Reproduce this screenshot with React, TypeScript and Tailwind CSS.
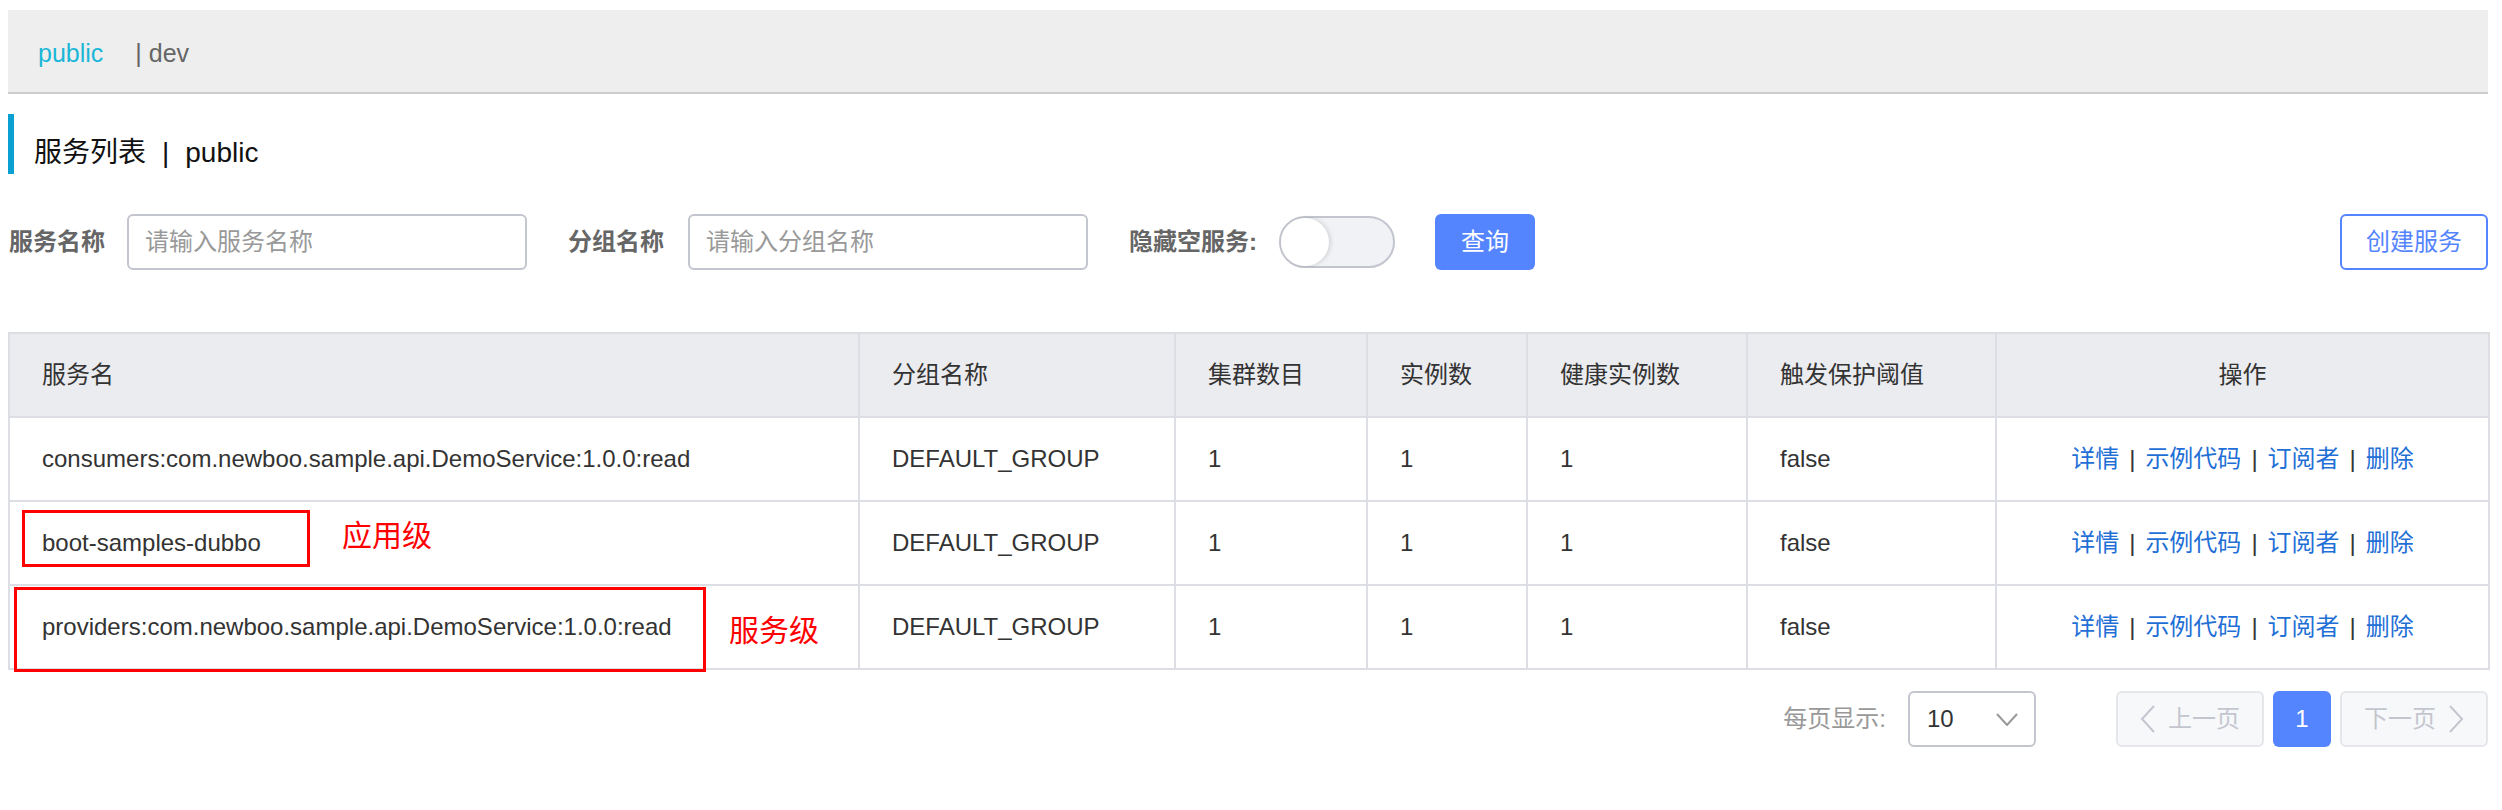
import { useState } from "react"

type Row = {
    name: string
    group: string
    clusters: number
    instances: number
    healthy: number
    threshold: string
}

const rows: Row[] = [
    { name: "consumers:com.newboo.sample.api.DemoService:1.0.0:read", group: "DEFAULT_GROUP", clusters: 1, instances: 1, healthy: 1, threshold: "false" },
    { name: "boot-samples-dubbo", group: "DEFAULT_GROUP", clusters: 1, instances: 1, healthy: 1, threshold: "false" },
    { name: "providers:com.newboo.sample.api.DemoService:1.0.0:read", group: "DEFAULT_GROUP", clusters: 1, instances: 1, healthy: 1, threshold: "false" },
]

const font = { fontFamily: '"Liberation Sans", "Noto Sans CJK SC", sans-serif' }

function ChevronLeft() {
    return (
        <svg width="16" height="28" viewBox="0 0 16 28" fill="none">
            <polyline points="14,1 2,14 14,27" stroke="#c4c6cf" strokeWidth="2" />
        </svg>
    )
}

function ChevronRight() {
    return (
        <svg width="16" height="28" viewBox="0 0 16 28" fill="none">
            <polyline points="2,1 14,14 2,27" stroke="#c4c6cf" strokeWidth="2" />
        </svg>
    )
}

export default function App() {
    const [hideEmpty, setHideEmpty] = useState(false)

    return (
        <div className="w-[2480px] ml-[8px] pt-[10px] bg-white text-[#333]" style={font}>
            {/* namespace bar */}
            <div className="h-[84px] bg-[#eeeeee] border-b-2 border-[#cccccc] flex items-center pl-[30px] pt-[6px] text-[25px]">
                <span className="text-[#1ab6d8]">public</span>
                <span className="ml-[32px] text-[#666]">| dev</span>
            </div>

            {/* title */}
            <div className="mt-[20px] h-[60px] flex items-end">
                <div className="w-[6px] h-full bg-[#0aa0d2]" />
                <div className="ml-[20px] text-[28px] leading-[42px] text-[#111]">
                    服务列表<span className="mx-[16px]">|</span>public
                </div>
            </div>

            {/* search */}
            <div className="mt-[40px] w-full h-[56px] flex items-center text-[24px]">
                <span className="shrink-0 ml-[1px] font-bold text-[#666]">服务名称</span>
                <input
                    className="shrink-0 ml-[22px] w-[400px] h-[56px] border-2 border-[#c4c6cf] rounded-[6px] px-[16px] outline-none placeholder:text-[#999]"
                    placeholder="请输入服务名称"
                />
                <span className="shrink-0 ml-[41px] font-bold text-[#666]">分组名称</span>
                <input
                    className="shrink-0 ml-[24px] w-[400px] h-[56px] border-2 border-[#c4c6cf] rounded-[6px] px-[16px] outline-none placeholder:text-[#999]"
                    placeholder="请输入分组名称"
                />
                <span className="shrink-0 ml-[41px] font-bold text-[#666]">隐藏空服务:</span>
                <button
                    onClick={() => setHideEmpty(!hideEmpty)}
                    className="shrink-0 ml-[22px] w-[116px] h-[52px] rounded-full border-2 border-[#c4c6cf] bg-[#f1f2f6] flex items-center"
                >
                    <span className="w-[48px] h-[48px] rounded-full bg-white shadow-[2px_0_4px_rgba(0,0,0,0.12)]" />
                </button>
                <button className="shrink-0 ml-[40px] w-[100px] h-[56px] rounded-[6px] bg-[#5584ff] text-white">查询</button>
                <div className="flex-1" />
                <button className="shrink-0 w-[148px] h-[56px] rounded-[6px] border-2 border-[#5584ff] text-[#5584ff]">
                    创建服务
                </button>
            </div>

            {/* table */}
            <div className="relative mt-[62px]">
                <table className="w-[2480px] table-fixed border-collapse text-[24px]">
                    <colgroup>
                        <col className="w-[850px]" />
                        <col className="w-[316px]" />
                        <col className="w-[192px]" />
                        <col className="w-[160px]" />
                        <col className="w-[220px]" />
                        <col className="w-[249px]" />
                        <col className="w-[493px]" />
                    </colgroup>
                    <thead>
                        <tr className="bg-[#ebecf0]">
                            {["服务名", "分组名称", "集群数目", "实例数", "健康实例数", "触发保护阈值"].map((h) => (
                                <th key={h} className="h-[84px] border-2 border-[#dcdee3] pl-[32px] text-left font-normal text-[#333]">
                                    {h}
                                </th>
                            ))}
                            <th className="h-[84px] border-2 border-[#dcdee3] text-center font-normal text-[#333]">操作</th>
                        </tr>
                    </thead>
                    <tbody>
                        {rows.map((r) => (
                            <tr key={r.name}>
                                <td className="h-[84px] border-2 border-[#dcdee3] pl-[32px]">{r.name}</td>
                                <td className="border-2 border-[#dcdee3] pl-[32px]">{r.group}</td>
                                <td className="border-2 border-[#dcdee3] pl-[32px]">{r.clusters}</td>
                                <td className="border-2 border-[#dcdee3] pl-[32px]">{r.instances}</td>
                                <td className="border-2 border-[#dcdee3] pl-[32px]">{r.healthy}</td>
                                <td className="border-2 border-[#dcdee3] pl-[32px]">{r.threshold}</td>
                                <td className="border-2 border-[#dcdee3] text-center">
                                    <a className="text-[#1f6fd6]">详情</a>
                                    <span className="mx-[10px]">|</span>
                                    <a className="text-[#1f6fd6]">示例代码</a>
                                    <span className="mx-[10px]">|</span>
                                    <a className="text-[#1f6fd6]">订阅者</a>
                                    <span className="mx-[10px]">|</span>
                                    <a className="text-[#1f6fd6]">删除</a>
                                </td>
                            </tr>
                        ))}
                    </tbody>
                </table>

                {/* red annotations drawn over the screenshot */}
                <div className="absolute left-[14px] top-[178px] w-[288px] h-[57px] border-[3px] border-[#ff0000]" />
                <div className="absolute left-[334px] top-[186px] text-[30px] leading-[36px] text-[#ff0000]">应用级</div>
                <div className="absolute left-[6px] top-[255px] w-[692px] h-[85px] border-[3px] border-[#ff0000]" />
                <div className="absolute left-[721px] top-[281px] text-[30px] leading-[36px] text-[#ff0000]">服务级</div>
            </div>

            {/* pagination */}
            <div className="mt-[21px] h-[56px] flex items-center justify-end text-[24px]">
                <span className="text-[#999]">每页显示:</span>
                <div className="ml-[22px] w-[128px] h-[56px] border-2 border-[#c4c6cf] rounded-[6px] flex items-center pl-[17px] pr-[16px]">
                    <span className="text-[#333]">10</span>
                    <svg className="ml-auto" width="22" height="13" viewBox="0 0 22 13" fill="none">
                        <polyline points="1,1 11,12 21,1" stroke="#999" strokeWidth="2" />
                    </svg>
                </div>
                <button className="ml-[80px] w-[148px] h-[56px] rounded-[6px] border-2 border-[#e6e7eb] bg-[#f7f8fa] text-[#c4c6cf] flex items-center justify-center gap-[12px]">
                    <ChevronLeft />
                    上一页
                </button>
                <button className="ml-[9px] w-[58px] h-[56px] rounded-[6px] bg-[#5584ff] text-white">1</button>
                <button className="ml-[9px] w-[148px] h-[56px] rounded-[6px] border-2 border-[#e6e7eb] bg-[#f7f8fa] text-[#c4c6cf] flex items-center justify-center gap-[12px]">
                    下一页
                    <ChevronRight />
                </button>
            </div>
        </div>
    )
}
